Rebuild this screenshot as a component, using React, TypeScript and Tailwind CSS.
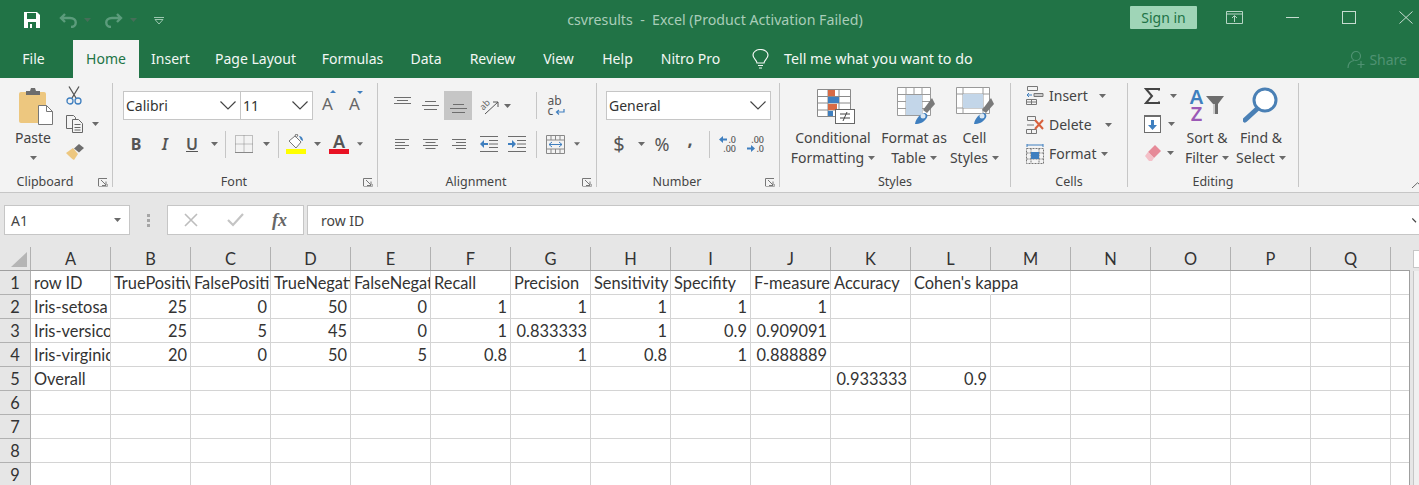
import React from 'react';

const UI_FONT = "font-['Noto_Sans',sans-serif]";
const CELL_FONT = "font-['Lato','Liberation_Sans',sans-serif]";

const COLUMNS = ['A', 'B', 'C', 'D', 'E', 'F', 'G', 'H', 'I', 'J', 'K', 'L', 'M', 'N', 'O', 'P', 'Q'];

const ROWS: Record<number, Record<string, string | number>> = {
  1: {
    A: 'row ID', B: 'TruePositives', C: 'FalsePositives', D: 'TrueNegatives', E: 'FalseNegatives', F: 'Recall',
    G: 'Precision', H: 'Sensitivity', I: 'Specifity', J: 'F-measure', K: 'Accuracy', L: "Cohen's kappa",
  },
  2: { A: 'Iris-setosa', B: 25, C: 0, D: 50, E: 0, F: 1, G: 1, H: 1, I: 1, J: 1 },
  3: { A: 'Iris-versicolor', B: 25, C: 5, D: 45, E: 0, F: 1, G: 0.833333, H: 1, I: 0.9, J: 0.909091 },
  4: { A: 'Iris-virginica', B: 20, C: 0, D: 50, E: 5, F: 0.8, G: 1, H: 0.8, I: 1, J: 0.888889 },
  5: { A: 'Overall', K: 0.933333, L: 0.9 },
};

const TABS = [
  { label: 'Insert', cls: 'w-[63px]' },
  { label: 'Page Layout', cls: 'w-[107px]' },
  { label: 'Formulas', cls: 'w-[87px]' },
  { label: 'Data', cls: 'w-[60px]' },
  { label: 'Review', cls: 'w-[73px]' },
  { label: 'View', cls: 'w-[59px]' },
  { label: 'Help', cls: 'w-[59px]' },
  { label: 'Nitro Pro', cls: 'w-[87px]' },
];

function Chev({ className = '' }: { className?: string }) {
  return (
    <svg width="7" height="4" viewBox="0 0 7 4" className={className}>
      <path d="M0 0h7L3.5 4z" fill="#6a6a6a" />
    </svg>
  );
}

function ComboChev() {
  return (
    <svg width="16" height="9" viewBox="0 0 16 9" fill="none" stroke="#444" strokeWidth="1.2">
      <path d="M0.5 0.5 8 8l7.5-7.5" />
    </svg>
  );
}

function Launcher() {
  return (
    <svg width="10" height="9" viewBox="0 0 10 9" fill="none" stroke="#777" strokeWidth="1">
      <path d="M.5 8V.5H9M3 2l5 5M8 3.5V7.5H4" />
      <path d="M.5 8.5h9V6" stroke="#aaa" />
    </svg>
  );
}

function Slot({ className = '', children }: { className?: string; children?: React.ReactNode }) {
  return <div className={`flex items-center justify-center shrink-0 h-full ${className}`}>{children}</div>;
}

function VSep() {
  return <div className="w-px h-[27px] bg-[#c6c6c6] shrink-0" />;
}

function Combo({ text, className }: { text: string; className: string }) {
  return (
    <div className={`h-[29px] bg-white border border-[#c6c6c6] flex items-center justify-between pl-[2px] pr-[4px] text-[14px] text-[#333] ${className}`}>
      <span>{text}</span>
      <ComboChev />
    </div>
  );
}

function Lines({ widths, align = 'left', gap = 3 }: { widths: number[]; align?: 'left' | 'center' | 'right'; gap?: number }) {
  const x = (w: number) => (align === 'left' ? 1 : align === 'center' ? 8.5 - w / 2 : 16 - w);
  const h = (widths.length - 1) * gap + 2;
  return (
    <svg width="17" height={h} viewBox={`0 0 17 ${h}`}>
      {widths.map((w, i) => (
        <rect key={i} x={x(w)} y={i * gap} width={w} height="1" fill="#6d6d6d" />
      ))}
    </svg>
  );
}

function Indent({ increase }: { increase?: boolean }) {
  return (
    <svg width="18" height="16" viewBox="0 0 18 16">
      <path d="M0 .5h18M9 4.500h9M9 8h9M9 11.500h9M0 15.500h18" stroke="#6d6d6d" fill="none" />
      {increase ? (
        <path d="M0 7h4V4l4 4-4 4V9H0z" fill="#3f7fbf" />
      ) : (
        <path d="M8 7H4V4L0 8l4 4V9h4z" fill="#3f7fbf" />
      )}
    </svg>
  );
}

function DecimalArrow({ left }: { left?: boolean }) {
  return (
    <svg width="8" height="7" viewBox="0 0 8 7">
      {left ? <path d="M8 2.500H4V0L0 3.500 4 7V4.500h4z" fill="#3f7fbf" /> : <path d="M0 2.500h4V0l4 3.500L4 7V4.500H0z" fill="#3f7fbf" />}
    </svg>
  );
}

function Group({ label, className, launcher = true, children }: { label: string; className: string; launcher?: boolean; children: React.ReactNode }) {
  return (
    <section className={`h-full flex flex-col border-r border-[#c6c6c6] shrink-0 ${className}`}>
      <div className="flex-1 min-h-0">{children}</div>
      <div className={`relative h-[14px] mb-[-2px] text-center text-[12.5px] leading-[14px] text-[#444] whitespace-nowrap ${launcher ? 'pr-[22px]' : ''}`}>
        {label}
        {launcher && (
          <span className="absolute right-[4px] top-[3px] flex">
            <Launcher />
          </span>
        )}
      </div>
    </section>
  );
}

function BigButton({ className, icon, lines, iconBox = 'h-[40px]' }: { className: string; icon: React.ReactNode; lines: [string, string]; iconBox?: string }) {
  return (
    <div className={`flex flex-col items-center shrink-0 text-[14px] leading-[20px] text-[#444] whitespace-nowrap ${className}`}>
      <div className={`flex items-center justify-center ${iconBox}`}>{icon}</div>
      <div className="mt-[2px]">{lines[0]}</div>
      <div className="flex items-center gap-[4px]">
        {lines[1]}
        <Chev />
      </div>
    </div>
  );
}

function CellAction({ icon, text, chevClass }: { icon: React.ReactNode; text: string; chevClass: string }) {
  return (
    <div className="h-[29px] flex items-center text-[14px] text-[#444]">
      <span className="w-[23px] flex">{icon}</span>
      <span>{text}</span>
      <Chev className={chevClass} />
    </div>
  );
}

function TableIcon({ className = '', cells }: { className?: string; cells: React.ReactNode }) {
  return (
    <svg width="40" height="38" viewBox="0 0 40 38" className={className}>
      {cells}
    </svg>
  );
}

function Brush() {
  return (
    <g>
      <path d="M26 23 35 11l3 6-8 9z" fill="#7a7a7a" />
      <path d="M18 37c1-6 6-11 10-11 3 1 3 4 1 6-2 3-6 5-11 5z" fill="#3f7fbf" />
      <circle cx="26" cy="29" r="2.5" fill="#dce8f3" />
    </g>
  );
}

function Ribbon() {
  return (
    <div className={`h-[115px] bg-[#f3f3f3] border-b border-[#c6c6c6] flex py-[5px] shrink-0 overflow-hidden ${UI_FONT}`}>
      <Group label="Clipboard" className="w-[113px]">
        <div className="flex">
          <div className="w-[66px] flex flex-col items-center text-[14px] leading-[20px] text-[#444]">
            <svg width="34" height="38" viewBox="0 0 34 38" className="mt-[4px] translate-x-[3px]">
              <rect x="0" y="5" width="27" height="31" rx="2" fill="#edc77f" />
              <path d="M7 8V4h4l1-3h4l1 3h4v4z" fill="#6d6d6d" />
              <path d="M19.500 18.500h8l6 6v13h-14z" fill="#fff" stroke="#777" />
              <path d="M27.500 18.500v6h6" fill="none" stroke="#777" />
            </svg>
            <div className="mt-[3px]">Paste</div>
            <Chev className="mt-[8px]" />
          </div>
          <div className="flex flex-col">
            <svg width="16" height="19" viewBox="0 0 16 19" className="mt-[3px]" fill="none" stroke="#3f7fbf" strokeWidth="1.300">
              <path d="M3 .5 10 12M13 .5 6 12" stroke="#555" />
              <circle cx="4" cy="15" r="3" />
              <circle cx="12" cy="15" r="3" />
            </svg>
            <div className="flex items-center mt-[10px]">
              <svg width="17" height="18" viewBox="0 0 17 18" fill="#f3f3f3" stroke="#666">
                <path d="M.5.5h7l2 2v11H.5z" />
                <path d="M6.500 4.500h6l4 4v9h-10z" />
                <path d="M8.500 9.500h6M8.500 12.500h6M8.500 15h6" />
              </svg>
              <Chev className="ml-[9px]" />
            </div>
            <svg width="18" height="16" viewBox="0 0 18 16" className="mt-[11px]">
              <path d="M0 9 7 4l5 6-4 6c-2-1-5-4-8-7z" fill="#edc77f" />
              <path d="M8 4.500 13 0l5 4-5 4.500z" fill="#6d6d6d" />
            </svg>
          </div>
        </div>
      </Group>

      <Group label="Font" className="w-[265px]">
        <div className="flex items-start pl-[10px] pt-[8px]">
          <Combo text="Calibri" className="w-[118px]" />
          <Combo text="11" className="w-[73px] -ml-px" />
          <Slot className="w-[27px] h-[29px] ml-[1px] text-[17px] text-[#666]">
            <span className="relative">A<span className="absolute -top-[1px] -right-[3px] w-0 h-0 border-x-[3px] border-x-transparent border-b-[3px] border-b-[#3f7fbf]" /></span>
          </Slot>
          <Slot className="w-[27px] h-[29px] text-[17px] text-[#666]">
            <span className="relative">A<span className="absolute top-0 -right-[3px] w-0 h-0 border-x-[3px] border-x-transparent border-t-[3px] border-t-[#3f7fbf]" /></span>
          </Slot>
        </div>
        <div className="flex items-center h-[24px] mt-[12px] pl-[10px] text-[#555]">
          <Slot className="w-[26px] text-[16px] font-bold">B</Slot>
          <Slot className="w-[32px] text-[16px] italic font-semibold">I</Slot>
          <Slot className="w-[22px] text-[16px] font-semibold underline">U</Slot>
          <Slot className="w-[22px]"><Chev /></Slot>
          <VSep />
          <Slot className="w-[36px]">
            <svg width="18" height="18" viewBox="0 0 18 18" fill="none" stroke="#888" strokeDasharray="1 1">
              <path d="M.5.5h17v17H.5zM9 .5v17M.5 9h17" />
              <path d="M0 17.500h18" strokeDasharray="none" />
            </svg>
          </Slot>
          <Slot className="w-[8px]"><Chev /></Slot>
          <div className="w-[8px]" />
          <VSep />
          <Slot className="w-[34px]">
            <svg width="20" height="20" viewBox="0 0 20 20">
              <path d="M3 7l6-5 6 6-5 6z" fill="#fff" stroke="#777" />
              <path d="M9 2l1-2 2 1-2 3" fill="none" stroke="#777" />
              <path d="M13 2c3 0 4 3 4 5l-2-1z" fill="#3f7fbf" />
              <rect y="15" width="20" height="5" fill="#ffff00" />
            </svg>
          </Slot>
          <Slot className="w-[8px]"><Chev /></Slot>
          <Slot className="w-[36px]">
            <div className="flex flex-col items-center w-[20px]">
              <span className="text-[18px] leading-[15px] font-semibold text-[#555]">A</span>
              <span className="w-[20px] h-[5px] bg-[#e81123]" />
            </div>
          </Slot>
          <Slot className="w-[6px]"><Chev /></Slot>
        </div>
      </Group>

      <Group label="Alignment" className="w-[219px]">
        <div className="flex items-center mt-[8px] h-[29px] pl-[15px]">
          <Slot className="w-[18px] -translate-y-[5px]"><Lines widths={[17, 11, 17]} align="center" /></Slot>
          <Slot className="w-[28px] ml-[5px]"><Lines widths={[11, 17, 13]} align="center" gap={4} /></Slot>
          <Slot className="w-[28px] bg-[#c6c6c6]"><div className="translate-y-[3px] flex"><Lines widths={[11, 17, 13]} align="center" gap={4} /></div></Slot>
          <Slot className="w-[24px] ml-[5px]">
            <svg width="20" height="18" viewBox="0 0 20 18" fill="none" stroke="#666">
              <text x="1" y="10" transform="rotate(-45 7 8)" fontSize="9" fill="#666" stroke="none">ab</text>
              <path d="M6 17 19 5M14 5h5v5" stroke="#555" />
            </svg>
          </Slot>
          <Slot className="w-[8px] ml-[2px]"><Chev /></Slot>
          <div className="w-[25px]" />
          <VSep />
          <Slot className="w-[38px]">
            <div className="relative text-[12px] leading-[10px] text-[#555] w-[17px]">
              ab<br />c
              <svg width="10" height="7" viewBox="0 0 10 7" className="absolute right-0 bottom-0">
                <path d="M9 0v3H2M4 1 1.500 3 4 5.500" fill="none" stroke="#3f7fbf" strokeWidth="1.200" />
              </svg>
            </div>
          </Slot>
        </div>
        <div className="flex items-center h-[24px] mt-[12px] pl-[15px]">
          <Slot className="w-[18px]"><Lines widths={[14, 10, 14, 10]} /></Slot>
          <Slot className="w-[28px] ml-[5px]"><Lines widths={[15, 10, 15, 10]} align="center" /></Slot>
          <Slot className="w-[28px]"><Lines widths={[14, 10, 14, 10]} align="right" /></Slot>
          <Slot className="w-[34px]"><Indent /></Slot>
          <Slot className="w-[22px]"><Indent increase /></Slot>
          <div className="w-[8px]" />
          <VSep />
          <Slot className="w-[37px]">
            <svg width="19" height="19" viewBox="0 0 19 19" fill="none" stroke="#888">
              <path d="M.5.500h18v18H.5zM.5 5h18M.5 14h18M9.500.5V5M9.500 14v4.500M5 14v4.500M14 14v4.500M5 .5V5M14 .5V5" />
              <path d="M3 9.500h13M6 7 3 9.500 6 12M13 7l3 2.500-3 2.500" stroke="#3f7fbf" />
            </svg>
          </Slot>
          <Slot className="w-[6px]"><Chev /></Slot>
        </div>
      </Group>

      <Group label="Number" className="w-[183px]">
        <div className="pl-[9px] pt-[8px]">
          <Combo text="General" className="w-[165px]" />
        </div>
        <div className="flex items-center h-[24px] mt-[12px] pl-[9px] text-[#555]">
          <Slot className="w-[26px] text-[20px]">$</Slot>
          <Slot className="w-[18px]"><Chev /></Slot>
          <Slot className="w-[24px] text-[18px]">%</Slot>
          <Slot className="w-[32px] text-[18px] font-bold -translate-y-[5px]">,</Slot>
          <Slot className="w-[3px]" />
          <VSep />
          <Slot className="w-[36px]">
            <div className="flex flex-col items-end w-[16px] text-[9px] leading-[9px] font-medium">
              <span className="flex items-center gap-[1px]"><DecimalArrow left />.0</span>
              <span>.00</span>
            </div>
          </Slot>
          <Slot className="w-[20px]">
            <div className="flex flex-col items-end w-[16px] text-[9px] leading-[9px] font-medium">
              <span>.00</span>
              <span className="flex items-center gap-[1px]"><DecimalArrow />.0</span>
            </div>
          </Slot>
        </div>
      </Group>

      <Group label="Styles" className="w-[231px]" launcher={false}>
        <div className="flex pt-[3px]">
          <BigButton
            className="w-[106px]"
            icon={
              <svg width="38" height="36" viewBox="0 0 38 36" className="translate-x-[3px] translate-y-[1px]">
                <path d="M.5.5h33v27H.5zM.5 7.500h33M.5 14h33M.5 21h33M11 .5v27M22 .5v27" fill="#fff" stroke="#8a8a8a" />
                <rect x="11" y="1" width="7" height="6" fill="#d86a44" />
                <rect x="11" y="8" width="11" height="6" fill="#3f7fbf" />
                <rect x="11" y="15" width="9" height="6" fill="#d86a44" />
                <rect x="11" y="22" width="5" height="5" fill="#3f7fbf" />
                <rect x="18.500" y="20.500" width="19" height="14" fill="#fff" stroke="#666" />
                <path d="M23 25h10M23 29h10M30 23l-4 9" stroke="#444" fill="none" />
              </svg>
            }
            lines={['Conditional', 'Formatting']}
          />
          <BigButton
            className="w-[62px] -ml-[3px]"
            icon={
              <TableIcon
                className="translate-x-[3px]"
                cells={
                  <>
                    <path d="M.5.5h33v28H.5zM.5 7.500h33M.5 14.500h33M.5 21.500h33M9 .5v28M17 .5v28M25 .5v28" fill="#fff" stroke="#9a9a9a" />
                    <rect x="9" y="8" width="16" height="20" fill="#c3d6e9" />
                    <Brush />
                  </>
                }
              />
            }
            lines={['Format as', 'Table']}
          />
          <BigButton
            className="w-[61px] -ml-[1px]"
            icon={
              <TableIcon
                className="translate-x-[1px]"
                cells={
                  <>
                    <path d="M.5.500h33v26H.5zM.5 7h33M.5 21h33M7 .5v26M27 .5v26" fill="#fff" stroke="#9a9a9a" />
                    <rect x="7" y="7" width="20" height="14" fill="#c3d6e9" />
                    <Brush />
                  </>
                }
              />
            }
            lines={['Cell', 'Styles']}
          />
        </div>
      </Group>

      <Group label="Cells" className="w-[117px]" launcher={false}>
        <div className="pl-[15px] flex flex-col mt-[-2px]">
          <CellAction
            text="Insert"
            chevClass="ml-[11px]"
            icon={
              <svg width="18" height="19" viewBox="0 0 18 19" fill="none" stroke="#777">
                <path d="M1.500.5h10v4h-10zM.5 13.500h10v5H.5zM5.500 13.500v5M.5 16h10" />
                <path d="M8 7.500h9v3H8z" fill="#ccc" />
                <path d="M6 9H1M3 7 1 9l2 2" stroke="#3f7fbf" />
              </svg>
            }
          />
          <CellAction
            text="Delete"
            chevClass="ml-[13px]"
            icon={
              <svg width="18" height="18" viewBox="0 0 18 18" fill="none" stroke="#777">
                <path d="M1.500.5h8v4h-8zM.5 13.500h10v4H.5zM5.500 13.500v4M1 9h7" />
                <path d="M9 4l8 9M17 4l-8 9" stroke="#d8603c" strokeWidth="2" />
              </svg>
            }
          />
          <CellAction
            text="Format"
            chevClass="ml-[4px]"
            icon={
              <svg width="18" height="20" viewBox="0 0 18 20" fill="none" stroke="#777">
                <path d="M1 1h16M1 0v3M17 0v3" stroke="#3f7fbf" />
                <path d="M.5 4.500h17v15H.5zM5 4.500v15M13 4.500v15M.5 9h17M.5 15h17" strokeDasharray="2 1" />
                <rect x="5" y="8" width="8" height="7" fill="#3f7fbf" stroke="none" />
              </svg>
            }
          />
        </div>
      </Group>

      <Group label="Editing" className="w-[171px]" launcher={false}>
        <div className="flex">
          <div className="flex flex-col w-[52px] pl-[16px] shrink-0">
            <div className="flex items-center h-[20px] mt-[3px] text-[#444]">
              <svg width="16" height="16" viewBox="0 0 16 16" fill="none" stroke="#444" strokeWidth="2" className="shrink-0">
                <path d="M15 2.500V1H2l6 7-6 7h13v-1.500" />
              </svg>
              <Chev className="ml-[10px] shrink-0" />
            </div>
            <div className="flex items-center h-[18px] mt-[9px]">
              <svg width="17" height="18" viewBox="0 0 17 18" className="shrink-0">
                <rect x=".5" y=".5" width="16" height="17" fill="#fff" stroke="#6d6d6d" />
                <rect width="17" height="2" fill="#6d6d6d" />
                <path d="M7 5h3v5h3l-4.500 5L4 10h3z" fill="#3f7fbf" />
              </svg>
              <Chev className="ml-[7px] shrink-0" />
            </div>
            <div className="flex items-center h-[16px] mt-[12px]">
              <svg width="17" height="16" viewBox="0 0 17 16" className="shrink-0">
                <path d="M11 0l6 6-7 7-6-6z" fill="#e68a98" />
                <path d="M4 7l6 6-2 3H5L1 11z" fill="#f4c0c8" />
              </svg>
              <Chev className="ml-[6px] shrink-0" />
            </div>
          </div>
          <BigButton
            className="w-[54px]"
            iconBox="h-[38px] mt-[3px] mb-[2px]"
            icon={
              <div className="flex items-center">
                <div className="flex flex-col items-center text-[20px] leading-[17px] font-semibold">
                  <span className="text-[#3f7fbf]">A</span>
                  <span className="text-[#9b59b6]">Z</span>
                </div>
                <svg width="18" height="18" viewBox="0 0 18 18" className="ml-[3px]">
                  <path d="M0 0h18l-6 8v10H7V8z" fill="#6d6d6d" />
                  <path d="M7 8h2v10H7z" fill="#ccc" />
                </svg>
              </div>
            }
            lines={['Sort &', 'Filter']}
          />
          <BigButton
            className="w-[54px]"
            iconBox="h-[38px] mt-[3px] mb-[2px]"
            icon={
              <svg width="36" height="36" viewBox="0 0 36 36" fill="none">
                <circle cx="22" cy="13" r="11" stroke="#4a80b5" strokeWidth="3" fill="#fff" />
                <path d="M14 22 2 33" stroke="#4a80b5" strokeWidth="5" strokeLinecap="round" />
              </svg>
            }
            lines={['Find &', 'Select']}
          />
        </div>
      </Group>

      <div className="flex-1 flex items-end justify-end">
        <svg width="7" height="6" viewBox="0 0 7 6" className="mb-[-1px]" fill="none" stroke="#666">
          <path d="M0 6 5.500.8 7 2" />
        </svg>
      </div>
    </div>
  );
}

function FormulaBar() {
  return (
    <div className={`h-[54px] bg-[#e6e6e6] flex items-start pt-[12px] pl-[4px] shrink-0 text-[#444] ${UI_FONT}`}>
      <div className="w-[126px] h-[30px] bg-white border border-[#c6c6c6] flex items-center justify-between pl-[6px] pr-[8px] text-[14px]">
        A1
        <Chev />
      </div>
      <div className="w-[37px] h-[30px] flex flex-col items-center justify-center gap-[2px]">
        <span className="w-[3px] h-[3px] bg-[#a6a6a6]" />
        <span className="w-[3px] h-[3px] bg-[#a6a6a6]" />
        <span className="w-[3px] h-[3px] bg-[#a6a6a6]" />
      </div>
      <div className="w-[137px] h-[30px] bg-white border border-[#c6c6c6] flex items-center">
        <Slot className="w-[45px]">
          <svg width="14" height="14" viewBox="0 0 14 14" stroke="#bdbdbd" strokeWidth="1.600">
            <path d="M1 1l12 12M13 1 1 13" />
          </svg>
        </Slot>
        <Slot className="w-[45px]">
          <svg width="17" height="14" viewBox="0 0 17 14" fill="none" stroke="#c4c4c4" strokeWidth="2.200">
            <path d="M1 7l5 5L16 1" />
          </svg>
        </Slot>
        <Slot className="w-[43px] font-['Liberation_Serif',serif] italic font-semibold text-[18px] text-[#666]">fx</Slot>
      </div>
      <div className="flex-1 h-[30px] ml-[3px] bg-white border-y border-l border-[#c6c6c6] flex items-center justify-between pl-[13px] text-[14px] overflow-hidden">
        row ID
        <svg width="8" height="9" viewBox="0 0 16 9" className="shrink-0 -mr-[1px]" fill="none" stroke="#444" strokeWidth="2.400">
          <path d="M0.500 0.500 8 8" />
        </svg>
      </div>
    </div>
  );
}

function Sheet() {
  return (
    <div className={`flex-1 min-h-0 bg-[#e6e6e6] overflow-hidden text-[16.4px] text-[#333] ${CELL_FONT}`}>
      <div className="flex h-[24px]">
        <div className="flex w-[1410px] shrink-0 border-b border-[#9f9f9f]">
          <div className="w-[31px] shrink-0 border-r border-[#b1b1b1] flex items-end justify-end pr-[3px] pb-[3px]">
            <div className="w-0 h-0 border-l-[16px] border-l-transparent border-b-[15px] border-b-[#b5b5b5]" />
          </div>
          {COLUMNS.map(c => (
            <div key={c} className="w-[80px] shrink-0 border-r border-[#b1b1b1] text-center leading-[23px]">{c}</div>
          ))}
        </div>
        <div className="flex-1 pl-[3px] pt-[3px]">
          <div className="h-[18px] bg-white border border-r-0 border-[#c6c6c6]" />
        </div>
      </div>
      <div className="flex">
        <div className="w-[1410px] shrink-0 border-r border-[#9f9f9f]">
          {[1, 2, 3, 4, 5, 6, 7, 8, 9].map(r => (
            <div key={r} className="flex h-[24px] bg-white">
              <div className="w-[31px] shrink-0 bg-[#e6e6e6] border-r border-b border-[#b1b1b1] text-center leading-[23px]">{r}</div>
              {COLUMNS.map(c => {
                const value = ROWS[r]?.[c];
                const spills = r === 1 && c === 'L';
                const numeric = typeof value === 'number';
                return (
                  <div
                    key={c}
                    className={`w-[80px] shrink-0 h-[24px] border-b border-[#d4d4d4] leading-[23px] whitespace-nowrap ${
                      spills ? 'border-r border-r-transparent relative z-10' : 'border-r border-r-[#d4d4d4] overflow-hidden'
                    } ${numeric ? 'text-right pr-[3px]' : 'pl-[3px]'} `}
                  >
                    {value}
                  </div>
                );
              })}
              <div className="flex-1 border-b border-[#d4d4d4]" />
            </div>
          ))}
        </div>
        <div className="flex-1 pl-[3px]">
          <div className="h-[448px] bg-[#f0f0f0] border-l border-[#c6c6c6]" />
        </div>
      </div>
    </div>
  );
}

export default function App() {
  return (
    <div className="w-[1419px] h-[485px] flex flex-col overflow-hidden relative">
      <div className={`h-[40px] bg-[#217346] flex items-center shrink-0 relative text-[14px] ${UI_FONT}`}>
        <svg width="16" height="16" viewBox="0 0 16 16" className="ml-[24px]">
          <path d="M0 0h13l3 3v13H0z" fill="#fff" />
          <rect x="3" y="1" width="9" height="6" fill="#217346" />
          <rect x="4" y="10" width="8" height="6" fill="#217346" />
          <rect x="6" y="12" width="2" height="4" fill="#fff" />
        </svg>
        <svg width="18" height="15" viewBox="0 0 18 15" className="ml-[19px]" fill="none" stroke="#5c9c7c" strokeWidth="2.400">
          <path d="M6 1 2 5l4 4M2 5h9c8 0 7 9 1 9" />
        </svg>
        <Chev className="ml-[7px] opacity-50" />
        <svg width="18" height="15" viewBox="0 0 18 15" className="ml-[14px]" fill="none" stroke="#5c9c7c" strokeWidth="2.400">
          <path d="m12 1 4 4-4 4M16 5H7c-8 0-7 9-1 9" />
        </svg>
        <Chev className="ml-[7px] opacity-50" />
        <svg width="10" height="7" viewBox="0 0 10 7" className="ml-[17px]" fill="none" stroke="#9cc7b0">
          <path d="M0 .5h10M1 2.500h8L5 7z" />
        </svg>
        <div className="absolute inset-x-0 text-center text-[14.2px] text-[#a9cdb9] whitespace-pre pl-[11px]">csvresults  -  Excel (Product Activation Failed)</div>
        <div className="ml-auto flex items-center relative">
          <div className="w-[67px] h-[23px] -mt-[6px] bg-[#9fd5b7] rounded-[1px] text-[#217346] text-center leading-[23px]">Sign in</div>
          <svg width="17" height="13" viewBox="0 0 17 13" className="ml-[29px] -mt-[6px]" fill="none" stroke="#b7d5c5">
            <path d="M.5.500h16v12H.5zM.5 3h16M8.500 11V5M6 7l2.500-2.500L11 7" />
          </svg>
          <div className="w-[13px] h-px bg-[#c6dcd0] ml-[43px] -mt-[6px]" />
          <div className="w-[14px] h-[13px] border border-[#c6dcd0] ml-[43px] -mt-[6px]" />
          <svg width="14" height="13" viewBox="0 0 14 13" className="ml-[43px] mr-[6px] -mt-[6px]" stroke="#c6dcd0">
            <path d="m.5.500 13 12M13.500.500l-13 12" />
          </svg>
        </div>
      </div>

      <div className={`h-[38px] bg-[#217346] flex items-stretch shrink-0 text-[14px] text-[#f2f7f4] ${UI_FONT}`}>
        <div className="w-[51px] ml-[8px] mr-[14px] text-center leading-[38px]">File</div>
        <div className="w-[66px] bg-[#f3f3f3] text-[#217346] text-center leading-[38px]">Home</div>
        {TABS.map(t => (
          <div key={t.label} className={`${t.cls} text-center leading-[38px] whitespace-nowrap`}>{t.label}</div>
        ))}
        <div className="flex items-center ml-[18px]">
          <svg width="17" height="20" viewBox="0 0 17 20" fill="none" stroke="#f2f7f4" strokeWidth="1.200">
            <path d="M5 14c0-3-4-4-4-8a7.500 5.500 0 0 1 15 0c0 4-4 5-4 8zM6 16.500h5M7 19h3" />
          </svg>
          <span className="ml-[15px] text-[14.3px]">Tell me what you want to do</span>
        </div>
        <div className="ml-auto flex items-center mr-[12px] text-[#4f9272]">
          <svg width="19" height="19" viewBox="0 0 19 19" fill="none" stroke="#4f9272" strokeWidth="1.200">
            <circle cx="9" cy="6" r="4.500" />
            <path d="M1 18c0-5 3-7 6-7.500M14 11v7M10.500 14.500h7" />
          </svg>
          <span className="ml-[3px]">Share</span>
        </div>
      </div>

      <Ribbon />
      <FormulaBar />
      <Sheet />
    </div>
  );
}
